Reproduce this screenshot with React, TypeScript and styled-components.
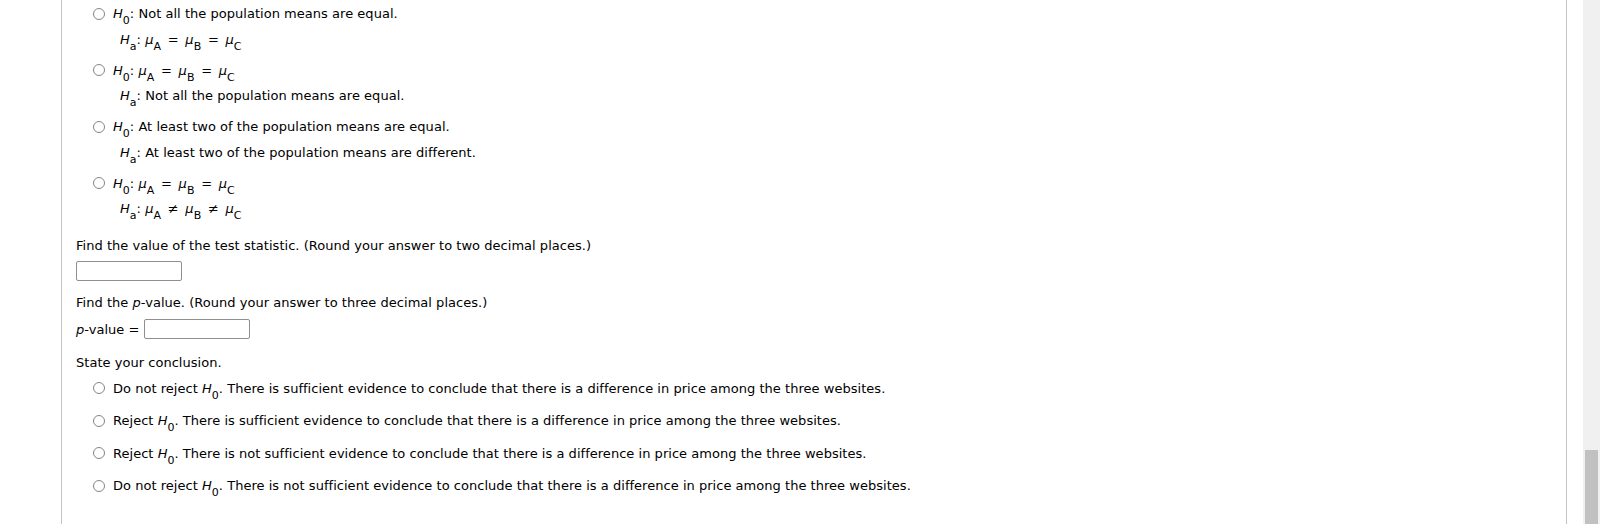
import React from "react";
import styled, { createGlobalStyle } from "styled-components";

const GlobalStyle = createGlobalStyle`
  html, body {
    margin: 0;
    padding: 0;
    height: 100%;
    overflow: hidden;
    background: #ffffff;
  }
  body {
    font-family: "DejaVu Sans", Verdana, sans-serif;
    font-size: 13px;
    letter-spacing: 0.03px;
    color: #000000;
  }
  #root { height: 100%; }
`;

const Page = styled.div`
  display: flex;
  height: 100%;
`;

const LeftMargin = styled.div`
  flex: none;
  width: 61px;
`;

const Panel = styled.main`
  flex: none;
  width: 1506px;
  box-sizing: border-box;
  border-left: 1px solid #c4c4c4;
  border-right: 1px solid #c4c4c4;
  padding: 1px 0 0 14px;
`;

const RightGap = styled.div`
  flex: none;
  width: 16px;
`;

const Scrollbar = styled.div`
  flex: none;
  width: 17px;
  background: #f0f0f0;
  display: flex;
  flex-direction: column;
  justify-content: flex-end;
  align-items: center;
`;

const ScrollThumb = styled.div`
  width: 13px;
  height: 74px;
  background: #c1c1c1;
`;

const ChoiceList = styled.div<{ $gap: number; $top?: number }>`
  display: flex;
  flex-direction: column;
  gap: ${(p) => p.$gap}px;
  margin-left: 17px;
  margin-top: ${(p) => p.$top ?? 0}px;
`;

const Choice = styled.div`
  display: flex;
  align-items: flex-start;
  gap: 8px;
`;

const Radio = styled.span`
  flex: none;
  box-sizing: border-box;
  width: 12px;
  height: 12px;
  margin-top: 6.5px;
  border: 1px solid #858585;
  border-radius: 50%;
  background: #ffffff;
`;

const ChoiceBody = styled.div`
  display: flex;
  flex-direction: column;
`;

const Line = styled.div<{ $indent?: number }>`
  line-height: 25.5px;
  white-space: nowrap;
  padding-left: ${(p) => p.$indent ?? 0}px;
`;

const Prompt = styled.div<{ $top: number }>`
  line-height: 25.5px;
  margin-top: ${(p) => p.$top}px;
  white-space: nowrap;
`;

const Sub = styled.sub`
  font-size: 11px;
  line-height: 0;
  vertical-align: -6px;
`;

const Var = styled.i`
  font-style: italic;
`;

const Op = styled.span`
  margin: 0 2.5px;
`;

const AnswerBox = styled.input<{ $top?: number }>`
  display: block;
  box-sizing: border-box;
  width: 106px;
  height: 20px;
  margin: ${(p) => p.$top ?? 0}px 0 0 0;
  padding: 0 3px;
  border: 1px solid #8f8f8f;
  border-radius: 2px;
  background: #ffffff;
  font: inherit;
`;

const PRow = styled.div<{ $top: number }>`
  display: flex;
  align-items: center;
  gap: 5px;
  margin-top: ${(p) => p.$top}px;
`;

const H = ({ s }: { s: string }) => (
  <>
    <Var>H</Var>
    <Sub>{s}</Sub>
  </>
);

const Mu = ({ s }: { s: string }) => (
  <>
    <Var>μ</Var>
    <Sub>{s}</Sub>
  </>
);

const Chain = ({ op }: { op: string }) => (
  <>
    <Mu s="A" /> <Op>{op}</Op> <Mu s="B" /> <Op>{op}</Op> <Mu s="C" />
  </>
);

const hypotheses: { h0: React.ReactNode; ha: React.ReactNode }[] = [
  { h0: "Not all the population means are equal.", ha: <Chain op="=" /> },
  { h0: <Chain op="=" />, ha: "Not all the population means are equal." },
  {
    h0: "At least two of the population means are equal.",
    ha: "At least two of the population means are different.",
  },
  { h0: <Chain op="=" />, ha: <Chain op="≠" /> },
];

const conclusions: { verdict: string; rest: string }[] = [
  {
    verdict: "Do not reject",
    rest: "There is sufficient evidence to conclude that there is a difference in price among the three websites.",
  },
  {
    verdict: "Reject",
    rest: "There is sufficient evidence to conclude that there is a difference in price among the three websites.",
  },
  {
    verdict: "Reject",
    rest: "There is not sufficient evidence to conclude that there is a difference in price among the three websites.",
  },
  {
    verdict: "Do not reject",
    rest: "There is not sufficient evidence to conclude that there is a difference in price among the three websites.",
  },
];

export default function App() {
  return (
    <>
      <GlobalStyle />
      <Page>
        <LeftMargin />
        <Panel>
          <ChoiceList $gap={5.5}>
            {hypotheses.map((h, i) => (
              <Choice key={i}>
                <Radio />
                <ChoiceBody>
                  <Line>
                    <H s="0" />: {h.h0}
                  </Line>
                  <Line $indent={7}>
                    <H s="a" />: {h.ha}
                  </Line>
                </ChoiceBody>
              </Choice>
            ))}
          </ChoiceList>

          <Prompt $top={11.5}>
            Find the value of the test statistic. (Round your answer to two decimal places.)
          </Prompt>
          <AnswerBox $top={2.5} />

          <Prompt $top={9.3}>
            Find the <Var>p</Var>-value. (Round your answer to three decimal places.)
          </Prompt>
          <PRow $top={3.5}>
            <span>
              <Var>p</Var>-value =
            </span>
            <AnswerBox />
          </PRow>

          <Prompt $top={10.7}>State your conclusion.</Prompt>
          <ChoiceList $gap={7} $top={0.3}>
            {conclusions.map((c, i) => (
              <Choice key={i}>
                <Radio />
                <ChoiceBody>
                  <Line>
                    {c.verdict} <H s="0" />. {c.rest}
                  </Line>
                </ChoiceBody>
              </Choice>
            ))}
          </ChoiceList>
        </Panel>
        <RightGap />
        <Scrollbar>
          <ScrollThumb />
        </Scrollbar>
      </Page>
    </>
  );
}
